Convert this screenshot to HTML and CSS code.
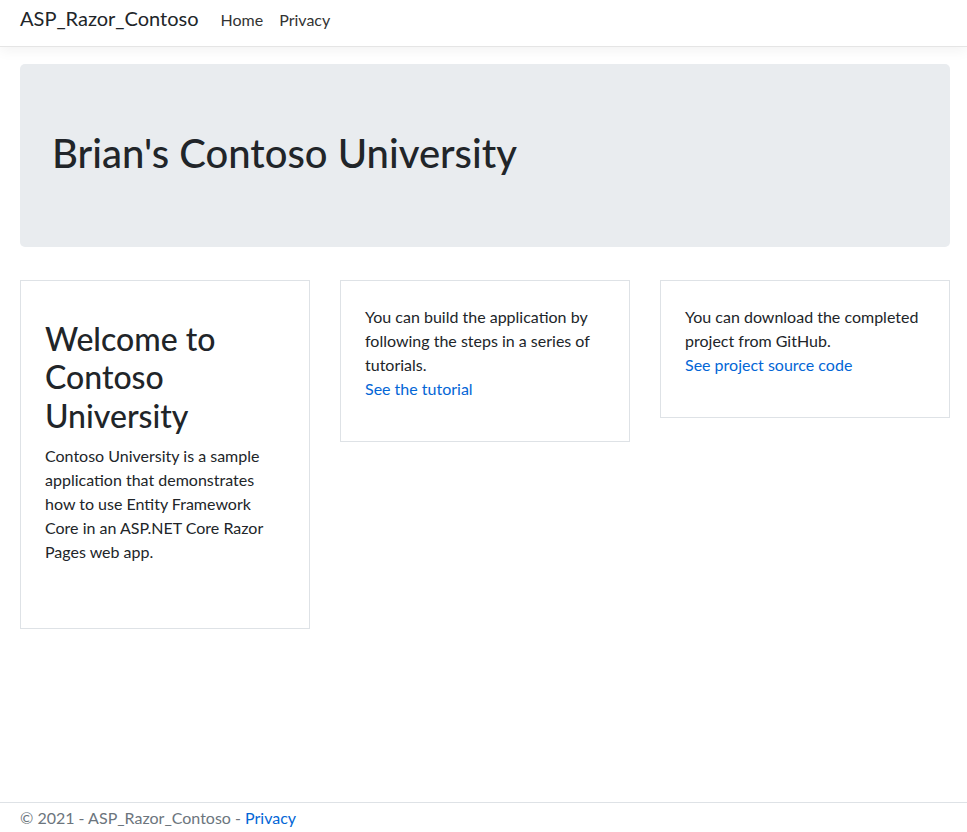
FILE: index.html
```html
<!DOCTYPE html>
<html lang="en">
<head>
<meta charset="utf-8">
<title>Home page - ASP_Razor_Contoso</title>
<link rel="stylesheet" href="styles.css">
</head>
<body>
<header class="navbar">
  <a class="brand" href="#">ASP_Razor_Contoso</a>
  <nav class="nav">
    <a class="nav-link" href="#">Home</a>
    <a class="nav-link" href="#">Privacy</a>
  </nav>
</header>
<main class="container">
  <div class="jumbotron">
    <h1>Brian's Contoso University</h1>
  </div>
  <div class="cards">
    <div class="card">
      <div class="card-body intro">
        <h2>Welcome to Contoso University</h2>
        <p>Contoso University is a sample application that demonstrates how to use Entity Framework Core in an ASP.NET Core Razor Pages web app.</p>
      </div>
    </div>
    <div class="card">
      <div class="card-body">
        <p>You can build the application by following the steps in a series of tutorials.<br><a href="#">See the tutorial</a></p>
      </div>
    </div>
    <div class="card">
      <div class="card-body">
        <p>You can download the completed project from GitHub.<br><a href="#">See project source code</a></p>
      </div>
    </div>
  </div>
</main>
<footer class="footer">
  &copy; 2021 - ASP_Razor_Contoso - <a href="#">Privacy</a>
</footer>
</body>
</html>
```
FILE: styles.css
```css
* { box-sizing: border-box; }
html, body { margin: 0; padding: 0; }
body {
  font-family: Lato, "Noto Sans", sans-serif;
  font-size: 16px;
  line-height: 1.5;
  color: #212529;
  background: #fff;
  min-height: 100vh;
  display: flex;
  flex-direction: column;
}
a { color: #0366d6; text-decoration: none; }

.navbar {
  display: flex;
  align-items: baseline;
  height: 47px;
  padding: 3px 20px 0;
  border-bottom: 1px solid #e5e5e5;
  box-shadow: 0 4px 12px rgba(0, 0, 0, 0.05);
}
.brand {
  font-size: 20px;
  line-height: 30px;
  color: #212529;
  margin-right: 14px;
}
.nav { display: flex; }
.nav-link {
  color: #333;
  padding: 0 8px;
}

.container {
  flex: 1;
  padding: 17px 17px 0 20px;
}
.jumbotron {
  background: #e9ecef;
  border-radius: 5px;
  padding: 65px 32px 63px;
  margin-bottom: 33px;
}
.jumbotron h1 {
  margin: 0 0 7px;
  font-size: 40px;
  font-weight: 500;
  line-height: 1.2;
}

.cards {
  display: grid;
  grid-template-columns: repeat(3, 1fr);
  gap: 30px;
  align-items: start;
}
.card {
  border: 1px solid #dee2e6;
  background: #fff;
}
.card-body { padding: 24px; }
.card-body p { margin: 0 0 16px; }
.card-body.intro { padding-bottom: 48px; }
.card-body h2 {
  margin: 15px 0 9px;
  font-size: 32px;
  font-weight: 500;
  line-height: 1.2;
}

.footer {
  border-top: 1px solid #dee2e6;
  padding: 3px 20px 2px;
  color: #6c757d;
  white-space: nowrap;
  height: 30px;
}
```
